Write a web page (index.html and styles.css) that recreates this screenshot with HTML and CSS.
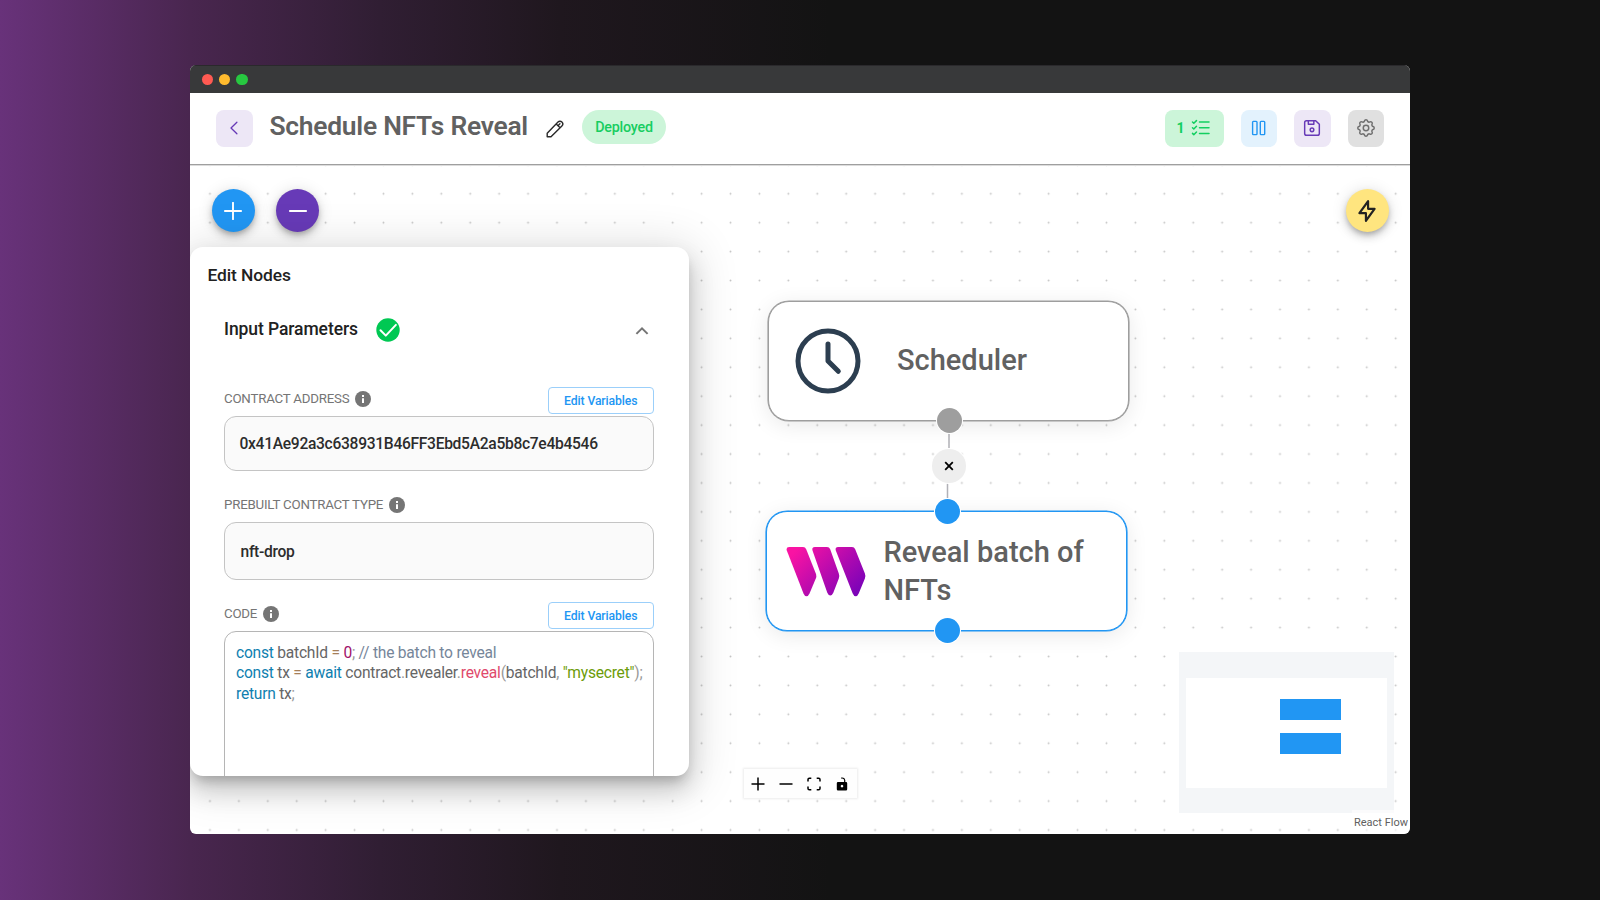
FILE: index.html
```html
<!DOCTYPE html>
<html lang="en">
<head>
<meta charset="utf-8">
<title>Schedule NFTs Reveal</title>
<link rel="stylesheet" href="styles.css">
</head>
<body>
<main class="window">
  <div class="titlebar"><i class="light red"></i><i class="light amber"></i><i class="light green"></i></div>
  <header class="header">
    <button class="tile back" aria-label="Back"><svg width="16" height="16" viewBox="0 0 16 16"><path d="M10.900 2.200 5 8l5.900 5.800" /></svg></button>
    <h1 class="title">Schedule NFTs Reveal</h1>
    <svg class="pencil" width="18" height="18" viewBox="0 0 18 18"><path d="M1.200 16.800v-3.600L12 2a2.750 2.750 0 0 1 3.900 3.900L5 16.800H1.200zM10.200 3.900l3.900 3.900M12 5.700l1.900-1.900"/></svg>
    <span class="status">Deployed</span>
    <div class="actions">
      <button class="tile runs"><span>1</span><svg width="20" height="18" viewBox="0 0 20 18"><path d="M8.500 3H18M8.500 8.700H18M8.500 14.400H18M1.500 3l1.300 1.300L5.500 1.600M1.500 8.700l1.300 1.300L5.500 7.300M1.500 14.400l1.300 1.300L5.500 13"/></svg></button>
      <button class="tile pause" aria-label="Pause"><svg width="16" height="16" viewBox="0 0 16 16"><rect x="1.600" y="1.400" width="4.400" height="13.200" rx=".8"/><rect x="9.300" y="1.400" width="4.400" height="13.200" rx=".8"/></svg></button>
      <button class="tile save" aria-label="Save"><svg width="22" height="22" viewBox="0 0 24 24"><path d="M6 4h10l4 4v10a2 2 0 0 1-2 2H6a2 2 0 0 1-2-2V6a2 2 0 0 1 2-2M8 4v4h6V4"/><circle cx="12" cy="14" r="2"/></svg></button>
      <button class="tile gear" aria-label="Settings"><svg width="22" height="22" viewBox="0 0 24 24"><path d="M10.325 4.317c.426-1.756 2.924-1.756 3.350 0a1.724 1.724 0 0 0 2.573 1.066c1.543-.94 3.310.826 2.370 2.370a1.724 1.724 0 0 0 1.065 2.572c1.756.426 1.756 2.924 0 3.350a1.724 1.724 0 0 0-1.066 2.573c.94 1.543-.826 3.310-2.370 2.370a1.724 1.724 0 0 0-2.572 1.065c-.426 1.756-2.924 1.756-3.350 0a1.724 1.724 0 0 0-2.573-1.066c-1.543.94-3.310-.826-2.370-2.370a1.724 1.724 0 0 0-1.065-2.572c-1.756-.426-1.756-2.924 0-3.350a1.724 1.724 0 0 0 1.066-2.573c-.94-1.543.826-3.310 2.370-2.370 1 .608 2.296.07 2.572-1.065z"/><circle cx="12" cy="12" r="3"/></svg></button>
    </div>
  </header>

  <section class="canvas">
    <svg class="grid" width="1220" height="669">
      <defs><pattern id="dots" x="5.500" y="14.300" width="28.920" height="28.920" patternUnits="userSpaceOnUse"><circle cx="14.460" cy="14.460" r=".95"/></pattern></defs>
      <rect width="1220" height="669" fill="url(#dots)"/>
    </svg>

    <svg class="edge" width="40" height="110"><path d="M21 0V55L19.500 56V110"/></svg>
    <article class="node scheduler">
      <svg class="clock" width="66" height="66" viewBox="0 0 66 66"><circle cx="33" cy="33" r="30"/><path d="M33 16v17l10.300 10.300"/></svg>
      <span class="node-name">Scheduler</span>
      <i class="handle bottom"></i>
    </article>
    <button class="cut" aria-label="Delete edge"><svg width="10" height="10" viewBox="0 0 10 10"><path d="M1.200 1.200l7.600 7.600M8.800 1.200L1.200 8.800"/></svg></button>
    <article class="node reveal">
      <svg class="logo" width="80" height="51" viewBox="0 0 80 51">
        <defs><linearGradient id="brand" gradientUnits="userSpaceOnUse" x1="14" y1="0" x2="66" y2="51"><stop offset="0" stop-color="#f913a3"/><stop offset="1" stop-color="#7d03b8"/></linearGradient></defs>
        <path d="M3.200 1H17q2.300 0 3.200 2.200L29.800 27.500q1 2.700 0 5.100L23.500 47.500q-1.200 2.800-3 2.800t-3-2.800L.8 4.600Q-.2 1 3.200 1z"/>
        <path d="M28.900 1H41q2.300 0 3.200 2.200L52.800 27.500q1 2.700 0 5.100L47.300 46.800q-1.200 2.800-3 2.800t-3-2.800L26.500 4.600Q25.500 1 28.900 1z"/>
        <path d="M52.200 1H66q2.300 0 3.200 2.200L78.900 27.500q1 2.700 0 5.100L72.700 47.500q-1.200 2.800-3 2.800t-3-2.800L49.800 4.600Q48.800 1 52.200 1z"/>
      </svg>
      <span class="node-name">Reveal batch of NFTs</span>
      <i class="handle top"></i><i class="handle bottom"></i>
    </article>

    <button class="fab add" aria-label="Add"><svg width="18" height="18" viewBox="0 0 18 18"><path d="M9 .8v16.400M.8 9h16.400"/></svg></button>
    <button class="fab remove" aria-label="Remove"><svg width="18" height="18" viewBox="0 0 18 18"><path d="M.8 9h16.400"/></svg></button>
    <button class="fab run" aria-label="Run"><svg width="26" height="26" viewBox="0 0 24 24"><path d="M13 3v7h6l-8 11v-7H5l8-11"/></svg></button>

    <div class="controls">
      <svg width="14" height="14" viewBox="0 0 14 14"><path d="M7 .5v13M.5 7h13"/></svg>
      <svg width="14" height="14" viewBox="0 0 14 14"><path d="M.5 7h13"/></svg>
      <svg width="14" height="14" viewBox="0 0 14 14"><path d="M1 4.500V2.500Q1 1.200 2.300 1.200H4.300M9.700 1.200h2q1.300 0 1.300 1.300v2M13 9.500v2q0 1.300-1.300 1.300h-2M4.300 12.800h-2Q1 12.800 1 11.500v-2"/></svg>
      <svg width="12" height="14" viewBox="0 0 12 14"><path class="shackle" d="M5.200 1.100Q8.200.6 8.700 3V5.500"/><path class="lock" fill-rule="evenodd" d="M2 5h8q1.200 0 1.200 1.200v6q0 1.200-1.200 1.200H2q-1.200 0-1.200-1.200v-6Q.8 5 2 5zM6 7.800a1.300 1.300 0 1 0 .01 0z"/></svg>
    </div>

    <div class="minimap"><div class="viewport"><i></i><i></i></div></div>
    <a class="attribution">React Flow</a>

    <aside class="panel">
      <h2 class="panel-title">Edit Nodes</h2>
      <div class="section-head">
        <h3>Input Parameters</h3>
        <svg class="check" width="24" height="24" viewBox="0 0 24 24"><circle cx="12" cy="12" r="11.700"/><path d="M4.500 12.300l5.300 5.300L19.900 6.900"/></svg>
        <svg class="chevron" width="14" height="10" viewBox="0 0 14 10"><path d="M1.400 7.900 7 2.300l5.600 5.600"/></svg>
      </div>
      <div class="label-row first"><span>CONTRACT ADDRESS</span><i class="info"><svg width="16" height="16" viewBox="0 0 16 16"><path d="M8 4v2M8 7.200v4.800"/></svg></i><button class="edit">Edit Variables</button></div>
      <div class="field address">0x41Ae92a3c638931B46FF3Ebd5A2a5b8c7e4b4546</div>
      <div class="label-row second"><span>PREBUILT CONTRACT TYPE</span><i class="info"><svg width="16" height="16" viewBox="0 0 16 16"><path d="M8 4v2M8 7.200v4.800"/></svg></i></div>
      <div class="field type">nft-drop</div>
      <div class="label-row third"><span>CODE</span><i class="info"><svg width="16" height="16" viewBox="0 0 16 16"><path d="M8 4v2M8 7.200v4.800"/></svg></i><button class="edit">Edit Variables</button></div>
      <pre class="code"><b class="kw">const</b> batchId <b class="op">=</b> <b class="num">0</b><b class="pn">;</b> <b class="cm">// the batch to reveal</b>
<b class="kw">const</b> tx <b class="op">=</b> <b class="kw">await</b> contract<b class="pn">.</b>revealer<b class="pn">.</b><b class="fn">reveal</b><b class="pn">(</b>batchId<b class="pn">,</b> <b class="str">"mysecret"</b><b class="pn">);</b>
<b class="kw">return</b> tx<b class="pn">;</b></pre>
    </aside>
  </section>
</main>
</body>
</html>
```

FILE: styles.css
```css
* { box-sizing: border-box; }
body {
  margin: 0;
  width: 1600px;
  height: 900px;
  padding: 65px 190px 0;
  overflow: hidden;
  font-family: Roboto, "Liberation Sans", sans-serif;
  background: linear-gradient(90deg, #68327a 0, #592c65 95px, #49264f 190px, #301e33 380px, #1f171e 560px, #131313 830px, #131313 100%);
}
button { font-family: inherit; padding: 0; border: 0; }
h1, h2, h3, pre { margin: 0; }
svg { display: block; fill: none; stroke: currentColor; stroke-linecap: round; stroke-linejoin: round; flex: none; }

.window { width: 1220px; height: 769px; border-radius: 6px; overflow: hidden; background: #fff; display: flex; flex-direction: column; }
.titlebar { height: 28px; flex: none; background: #38393a; border-top: 1px solid #2a292c; display: flex; align-items: center; gap: 5.400px; padding: 0 11.500px; }
.light { width: 11.800px; height: 11.800px; border-radius: 50%; }
.red { background: #ff5a52; }
.amber { background: #ffbb2e; }
.green { background: #27c840; }

.header { height: 72px; flex: none; padding: 17px 26px 0; display: flex; align-items: flex-start; border-bottom: 1px solid #9f9f9f; box-shadow: 0 1px 0 #dcdcdc; position: relative; z-index: 1; }
.tile { height: 37px; border-radius: 8px; display: flex; align-items: center; justify-content: center; padding-bottom: 1.500px; }
.back { width: 37px; background: #ede7f6; color: #673ab7; stroke-width: 1.300; padding-right: 1.500px; }
.title { margin-left: 16.500px; font-size: 26.400px; line-height: 33px; font-weight: 600; letter-spacing: -.26px; color: #616161; white-space: nowrap; width: 276.500px; }
.pencil { margin: 9.500px 0 0 0; color: #2a2a2a; stroke-width: 1.400; }
.status { margin-left: 18px; width: 84px; height: 34px; border-radius: 17px; background: #ccf5d9; color: #17cd61; font-size: 14.300px; letter-spacing: -.22px; font-weight: 500; line-height: 34px; text-align: center; }
.actions { margin-left: auto; display: flex; gap: 17px; }
.runs { width: 59px; background: #ccf5d9; color: #12cf60; font-weight: 700; font-size: 14px; gap: 6px; stroke-width: 1.500; padding-right: 2px; }
.pause { width: 36px; background: #e3f2fd; color: #2196f3; stroke-width: 1.400; }
.save { width: 37px; background: #ede7f6; color: #673ab7; stroke-width: 1.600; padding-right: 1px; }
.gear { width: 36px; background: #e0e0e0; color: #707070; stroke-width: 1.600; }

.canvas { position: relative; flex: 1; overflow: hidden; }
.grid { position: absolute; inset: 0; stroke: none; }
.grid circle { fill: #c4c4c4; }

.node { position: absolute; width: 361px; height: 120px; border-radius: 21px; background: #fff; display: flex; align-items: center; }
.scheduler { left: 578px; top: 136px; border: 1px solid #9e9e9e; padding-left: 26px; gap: 36px; box-shadow: 0 0 0 .6px #9e9e9e, 0 4px 22px rgba(0, 0, 0, .09); }
.reveal { left: 576.400px; top: 346px; border: 1px solid #2196f3; padding-left: 18.500px; gap: 17.500px; box-shadow: 0 0 0 .6px #2196f3, 0 4px 22px rgba(0, 0, 0, .09); }
.clock { color: #2c3e50; stroke-width: 5; }
.logo path { fill: url(#brand); stroke: none; }
.node-name { width: 215px; font-size: 29px; line-height: 38px; font-weight: 500; color: #616161; }
.scheduler .node-name { padding-bottom: 2px; }
.handle { position: absolute; left: 168px; width: 25px; height: 25px; border-radius: 50%; background: #2196f3; box-shadow: 0 0 0 1px #fff; }
.handle.top { top: -13px; }
.handle.bottom { bottom: -13px; }
.scheduler .handle { background: #9e9e9e; }
.edge { position: absolute; left: 738px; top: 246px; color: #b1b1b7; stroke-width: 1.500; }
.cut { position: absolute; left: 742px; top: 284px; width: 33.500px; height: 33.500px; border-radius: 50%; background: #eee; box-shadow: 0 0 0 1px #fff; color: #000; stroke-width: 1.800; display: flex; align-items: center; justify-content: center; }
.cut svg { stroke-linecap: butt; }

.fab { position: absolute; top: 24px; width: 43px; height: 43px; border-radius: 50%; display: flex; align-items: center; justify-content: center; color: #fff; stroke-width: 1.900; box-shadow: 0 3px 5px -1px rgba(0, 0, 0, .2), 0 5px 9px rgba(0, 0, 0, .14), 0 1px 16px rgba(0, 0, 0, .12); }
.add { left: 21.500px; background: #2196f3; }
.remove { left: 86px; background: #673ab7; }
.run { left: 1155.500px; background: #ffe57f; color: #222; stroke-width: 2; }

.controls { position: absolute; left: 554px; top: 604px; width: 113px; height: 29px; background: #fefefe; box-shadow: 0 0 2px 1px rgba(0, 0, 0, .08); display: flex; align-items: center; padding-left: 7px; gap: 14px; color: #000; stroke-width: 1.500; }
.controls svg { stroke-linecap: butt; }
.controls svg:last-child { margin-left: 1px; }
.shackle { stroke-width: 1.200; }
.lock { fill: #000; stroke: none; }

.minimap { position: absolute; left: 989px; top: 487px; width: 215px; height: 161px; background: #f4f6f8; padding: 25.500px 7px; }
.viewport { height: 110px; background: #fff; padding: 21.500px 0 0 94px; display: flex; flex-direction: column; gap: 13.800px; }
.viewport i { width: 61px; height: 20.700px; background: #2196f3; }
.attribution { position: absolute; right: 0; bottom: 0; width: 58px; height: 24px; background: rgba(255, 255, 255, .6); color: #606060; font-size: 11px; line-height: 25px; text-align: center; white-space: nowrap; }

.panel { position: absolute; left: 0; top: 82px; width: 499px; height: 529px; border-radius: 13px; background: #fff; overflow: hidden; padding: 17px 35px 0 34px; display: flex; flex-direction: column; color: #212121; }
.panel { box-shadow: 0 8px 12px -4px rgba(0, 0, 0, .22), 0 14px 24px 2px rgba(0, 0, 0, .14), 0 5px 46px 8px rgba(0, 0, 0, .12); }
.panel > * { flex: none; }
.panel-title { margin-left: -16.500px; font-size: 17.400px; letter-spacing: -.1px; line-height: 22px; font-weight: 500; }
.section-head { margin-top: 31px; height: 26px; display: flex; align-items: center; }
.section-head h3 { width: 151.500px; font-size: 17.500px; letter-spacing: -.08px; line-height: 24px; padding-bottom: 2.500px; font-weight: 500; white-space: nowrap; }
.check { stroke: none; }
.check circle { fill: #00c853; }
.check path { stroke: #fff; stroke-width: 2; }
.chevron { margin-left: auto; margin-right: 5.500px; margin-top: 1px; color: #757575; stroke-width: 2; stroke-linecap: butt; stroke-linejoin: miter; }

.label-row { display: flex; align-items: flex-start; height: 29px; color: #757575; font-size: 13.300px; letter-spacing: -.22px; line-height: 23px; }
.label-row span { white-space: nowrap; }
.first { margin-top: 44px; }
.second { margin-top: 21px; height: 30px; padding-top: 1px; }
.third { margin-top: 22px; }
.info { width: 16px; height: 16px; margin: 4px 0 0 5.500px; border-radius: 50%; background: #757575; color: #fff; stroke-width: 2; }
.info svg { stroke-linecap: butt; }
.edit { margin-left: auto; width: 106.500px; height: 27px; border: 1px solid #9bcffa; border-radius: 4px; background: #fff; color: #2196f3; font-size: 12.200px; letter-spacing: -.1px; font-weight: 500; }
.field { border: 1px solid #c4c4c4; border-radius: 12px; background: #fafafa; padding-left: 14.500px; padding-top: 1px; font-size: 15.600px; letter-spacing: -.3px; font-weight: 500; display: flex; align-items: center; color: #2c2c2c; }
.address { height: 55px; }
.type { height: 58px; padding-left: 15.500px; }
.code { height: 190px; border: 1px solid #b5b5b5; border-radius: 12px; padding: 11px 0 0 11px; font: 400 15.600px/20.300px Roboto, sans-serif; letter-spacing: -.235px; color: #666; white-space: pre; }
.code b { font-weight: 400; }
.code .kw { color: #0f7fb0; }
.code .op { color: #a67f59; }
.code .num { color: #a0106a; }
.code .pn { color: #999; }
.code .cm { color: #76869a; }
.code .fn { color: #e04a6c; }
.code .str { color: #6c9c08; }
```
